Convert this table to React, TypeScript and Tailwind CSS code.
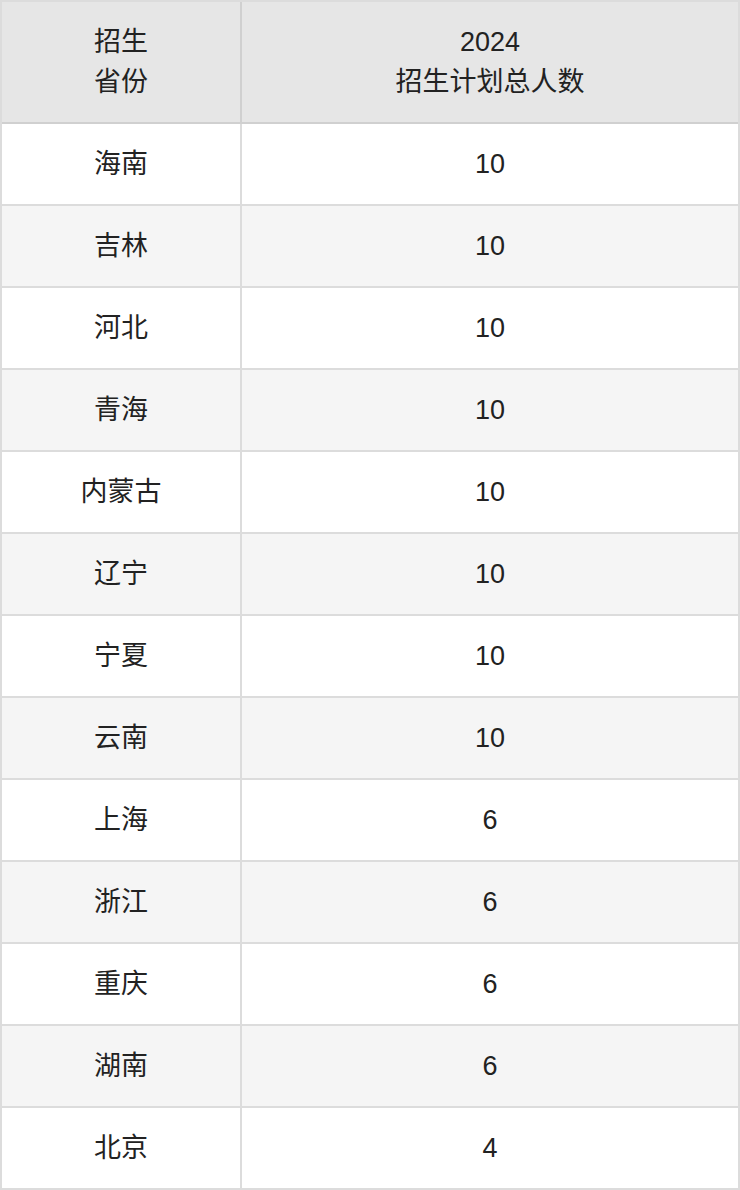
const rows: [string, number][] = [
  ["海南", 10],
  ["吉林", 10],
  ["河北", 10],
  ["青海", 10],
  ["内蒙古", 10],
  ["辽宁", 10],
  ["宁夏", 10],
  ["云南", 10],
  ["上海", 6],
  ["浙江", 6],
  ["重庆", 6],
  ["湖南", 6],
  ["北京", 4],
]

export default function App() {
  return (
    <div
      className="w-[740px] bg-white text-[#222] text-[27px]"
      style={{ fontFamily: '"Liberation Sans", "Noto Sans CJK SC", sans-serif' }}
    >
      <div className="border-2 border-[#dcdcdc]">
        {/* header */}
        <div className="flex h-[122px] border-b-2 border-[#d0d0d0] bg-[#e6e6e6] leading-[40px]">
          <div className="flex w-[240px] items-center justify-center border-r-2 border-[#d0d0d0] text-center">
            招生
            <br />
            省份
          </div>
          <div className="flex flex-1 items-center justify-center text-center">
            2024
            <br />
            招生计划总人数
          </div>
        </div>

        {rows.map(([province, count], i) => (
          <div
            key={province}
            className={`flex ${i < rows.length - 1 ? "h-[82px] border-b-2" : "h-[80px]"} border-[#dcdcdc] ${
              i % 2 === 1 ? "bg-[#f5f5f5]" : "bg-white"
            }`}
          >
            <div className="flex w-[240px] items-center justify-center border-r-2 border-[#dcdcdc]">
              {province}
            </div>
            <div className="flex flex-1 items-center justify-center">{count}</div>
          </div>
        ))}
      </div>
    </div>
  )
}
